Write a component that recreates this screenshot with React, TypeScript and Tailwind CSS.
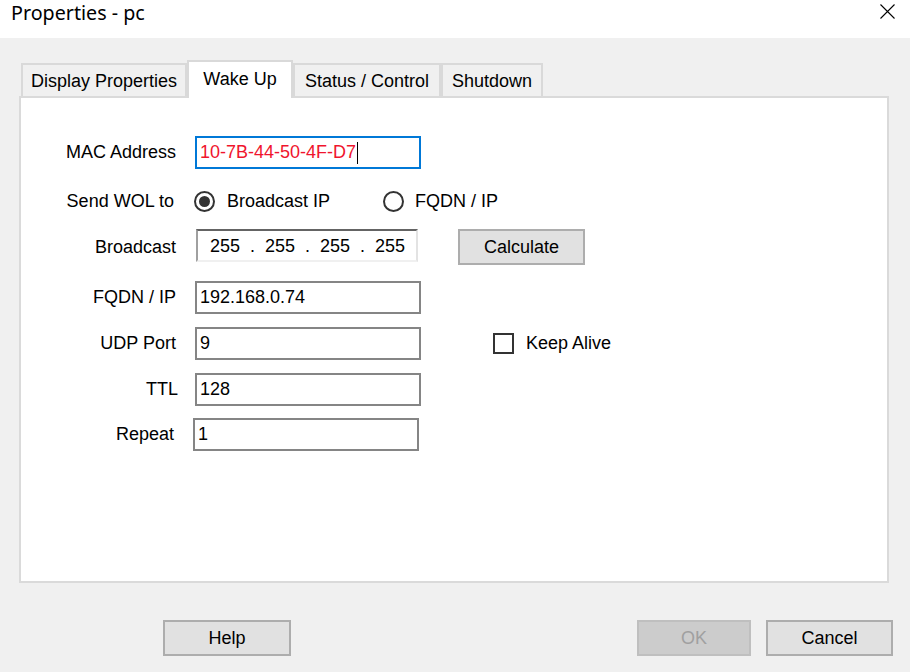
import React from 'react';

const fieldBox = 'h-[33px] w-[226px] border-2 border-[#858585] bg-white pl-[3px] flex items-center text-[18px] text-black';

function Tab({ label, w, active }: { label: string; w: string; active?: boolean }) {
  if (active) {
    return (
      <div className={`${w} h-[38px] -mb-[2px] relative z-10 bg-white border-2 border-b-0 border-[#d9d9d9] flex justify-center pt-[4px] text-black`}>
        {label}
      </div>
    );
  }
  return (
    <div className={`${w} h-[33px] bg-[#f0f0f0] border-2 border-b-0 border-[#d9d9d9] flex items-center justify-center pt-[1px] text-black`}>
      {label}
    </div>
  );
}

function Btn({ label, w, disabled }: { label: string; w: string; disabled?: boolean }) {
  return (
    <button
      type="button"
      className={`${w} h-[36px] border-2 flex items-center justify-center text-[18px] ${
        disabled ? 'bg-[#cccccc] border-[#bfbfbf] text-[#a0a0a0]' : 'bg-[#e1e1e1] border-[#adadad] text-black'
      }`}
    >
      {label}
    </button>
  );
}

export default function App() {
  return (
    <div className="w-[910px] h-[672px] bg-[#f0f0f0] flex flex-col font-['Liberation_Sans',Arial,sans-serif] text-[18px] overflow-hidden">
      {/* title bar */}
      <div className="h-[38px] bg-white flex items-start justify-between pl-[11px] pr-[15px]">
        <span className="font-['Noto_Sans',sans-serif] text-[19.7px] leading-[26px] text-black">Properties - pc</span>
        <svg width="15" height="15" viewBox="0 0 15 15" className="mt-[4px]">
          <path d="M0.5 0.5 L14.5 14.5 M14.5 0.5 L0.5 14.5" stroke="#000" strokeWidth="1.1" fill="none" />
        </svg>
      </div>

      <div className="flex-1 flex flex-col px-[19px] pt-[22px]">
        {/* tabs */}
        <div className="flex items-end h-[36px] pl-[2px]">
          <Tab label="Display Properties" w="w-[166px]" />
          <Tab label="Wake Up" w="w-[106px]" active />
          <Tab label="Status / Control" w="w-[148px]" />
          <Tab label="Shutdown" w="w-[102px]" />
        </div>

        {/* panel */}
        <div className="h-[487px] w-[870px] bg-white border-2 border-[#dadada] flex flex-col">
          {/* MAC */}
          <div className="flex items-center h-[33px] mt-[38px]">
            <div className="w-[155px] text-right">MAC Address</div>
            <div className="ml-[19px] h-[33px] w-[226px] border-2 border-[#0078d7] bg-white pl-[3px] flex items-center text-[#f0142d]">
              10-7B-44-50-4F-D7
              <span className="inline-block w-[1px] h-[22px] bg-black ml-[1px]" />
            </div>
          </div>

          {/* Send WOL to */}
          <div className="flex items-center h-[34px] mt-[15px]">
            <div className="w-[155px] text-right pr-[2px]">Send WOL to</div>
            <div className="ml-[18px] w-[21px] h-[21px] rounded-full border-2 border-[#333333] flex items-center justify-center">
              <div className="w-[11px] h-[11px] rounded-full bg-[#333333]" />
            </div>
            <div className="ml-[12px]">Broadcast IP</div>
            <div className="ml-[53px] w-[21px] h-[21px] rounded-full border-2 border-[#333333]" />
            <div className="ml-[11px]">FQDN / IP</div>
          </div>

          {/* Broadcast */}
          <div className="flex items-start h-[36px] mt-[11px]">
            <div className="w-[155px] h-[36px] flex items-center justify-end">Broadcast</div>
            <div className="ml-[20px] h-[33px] w-[222px] bg-white border-t-2 border-l-2 border-t-[#646464] border-l-[#a0a0a0] border-b-2 border-r-2 border-b-[#f0f0f0] border-r-[#e3e3e3] flex items-center pl-[5px] pt-[2px] text-black">
              <span className="w-[44px] text-center">255</span>
              <span className="w-[11px] text-center">.</span>
              <span className="w-[44px] text-center">255</span>
              <span className="w-[11px] text-center">.</span>
              <span className="w-[44px] text-center">255</span>
              <span className="w-[11px] text-center">.</span>
              <span className="w-[44px] text-center">255</span>
            </div>
            <div className="ml-[40px]">
              <Btn label="Calculate" w="w-[127px]" />
            </div>
          </div>

          {/* FQDN */}
          <div className="flex items-center h-[33px] mt-[16px]">
            <div className="w-[155px] text-right">FQDN / IP</div>
            <div className={`ml-[19px] ${fieldBox}`}>192.168.0.74</div>
          </div>

          {/* UDP */}
          <div className="flex items-center h-[33px] mt-[13px]">
            <div className="w-[155px] text-right">UDP Port</div>
            <div className={`ml-[19px] ${fieldBox}`}>9</div>
            <div className="ml-[72px] w-[21px] h-[21px] border-2 border-[#333333] bg-white" />
            <div className="ml-[12px]">Keep Alive</div>
          </div>

          {/* TTL */}
          <div className="flex items-center h-[33px] mt-[13px]">
            <div className="w-[157px] text-right">TTL</div>
            <div className={`ml-[17px] ${fieldBox}`}>128</div>
          </div>

          {/* Repeat */}
          <div className="flex items-center h-[33px] mt-[12px]">
            <div className="w-[153px] text-right">Repeat</div>
            <div className={`ml-[19px] ${fieldBox}`}>1</div>
          </div>
        </div>

        {/* footer buttons */}
        <div className="flex items-center mt-[37px] pl-[144px] -mr-[2px]">
          <Btn label="Help" w="w-[128px]" />
          <div className="flex-1" />
          <Btn label="OK" w="w-[114px]" disabled />
          <div className="ml-[15px]">
            <Btn label="Cancel" w="w-[127px]" />
          </div>
        </div>
      </div>
    </div>
  );
}
